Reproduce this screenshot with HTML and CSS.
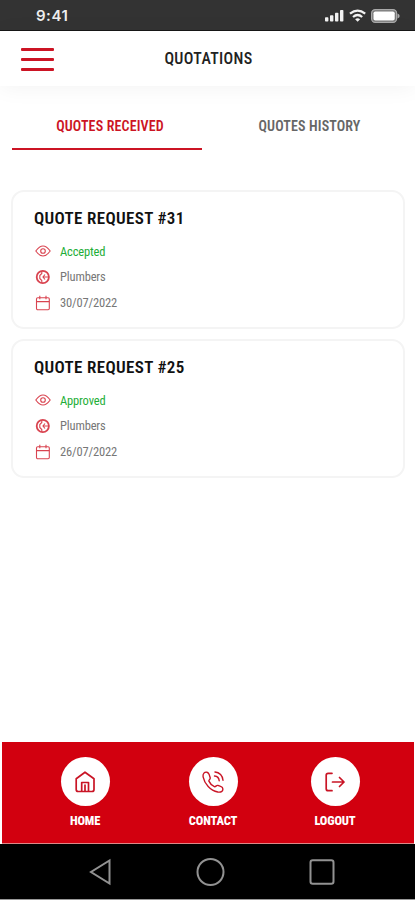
FILE: index.html
```html
<!DOCTYPE html>
<html lang="en">
<head>
<meta charset="utf-8">
<title>Quotations</title>
<link rel="stylesheet" href="styles.css">
</head>
<body>
<div class="status">
  <span class="time">9:41</span>
  <svg class="signals" width="76" height="16" viewBox="0 0 76 16">
    <g fill="#f2f2f2"><rect x="1" y="9.3" width="3.4" height="4.3" rx=".8"/><rect x="6" y="7.2" width="3.4" height="6.4" rx=".8"/><rect x="11" y="4.8" width="3.4" height="8.8" rx=".8"/><rect x="16" y="2" width="3.4" height="11.6" rx=".8"/></g>
    <g fill="none" stroke="#f2f2f2" stroke-width="2.2"><path d="M26 5.700q7.600-6.200 15.200 0"/><path d="M29 9q4.600-4 9.200 0"/></g>
    <path d="M31.100 11.200q2.500-2 5 0l-2.500 2.600z" fill="#f2f2f2"/>
    <rect x="47.600" y="1.600" width="25" height="12.800" rx="3.600" fill="#777" stroke="#aaa" stroke-width="1.200"/>
    <rect x="49.500" y="3.400" width="21.200" height="9.200" rx="1.800" fill="#fff"/>
    <path d="M73.500 5.600q2.200.8 2.200 2.400t-2.200 2.400z" fill="#aaa"/>
  </svg>
</div>
<header class="header">
  <button class="menu" aria-label="Menu"><i></i><i></i><i></i></button>
  <h1><span>QUOTATIONS</span></h1>
</header>
<nav class="tabs">
  <a class="tab active"><span>QUOTES RECEIVED</span></a>
  <a class="tab"><span>QUOTES HISTORY</span></a>
</nav>
<svg class="defs" width="0" height="0">
  <symbol id="eye" viewBox="0 0 16 16"><path d="M.8 8Q8-2 15.200 8 8 18 .8 8z"/><circle cx="8" cy="8" r="2.300"/></symbol>
  <symbol id="trade" viewBox="0 0 16 16"><circle cx="7.800" cy="8" r="6.100" stroke-width="1.800"/><path d="M6.800 2v2.500L4.800 6.500v3l2 2V14M7.500 8H14M10 5.500 8 8l2 2.500"/></symbol>
  <symbol id="date" viewBox="0 0 16 16"><rect x="1.500" y="2.800" width="12.800" height="12" rx="1.200"/><path d="M1.500 6.600h12.800M4.800.8v3.400M11 .8v3.400"/></symbol>
</svg>
<main class="cards">
  <section class="card">
    <h2><span>QUOTE REQUEST #31</span></h2>
    <ul>
      <li class="ok"><svg><use href="#eye"/></svg><span>Accepted</span></li>
      <li><svg><use href="#trade"/></svg><span>Plumbers</span></li>
      <li><svg><use href="#date"/></svg><span>30/07/2022</span></li>
    </ul>
  </section>
  <section class="card">
    <h2><span>QUOTE REQUEST #25</span></h2>
    <ul>
      <li class="ok"><svg><use href="#eye"/></svg><span>Approved</span></li>
      <li><svg><use href="#trade"/></svg><span>Plumbers</span></li>
      <li><svg><use href="#date"/></svg><span>26/07/2022</span></li>
    </ul>
  </section>
</main>
<footer class="bottom">
  <a class="item"><b class="disc"><svg viewBox="0 0 24 24"><path d="M3.200 8.700 12 2.200l9 6.500v10.800q0 2-2 2H5.200q-2 0-2-2zM8.700 21.500v-9h6.800v9M12 15v6.500"/></svg></b><span>HOME</span></a>
  <a class="item"><b class="disc"><svg class="phone" viewBox="0 0 24 24"><path d="M6 2.200c-2.400-.6-4.500 1.600-3.900 4.600C3.600 14 9.200 20.400 16.800 22c3.200.6 5.100-.8 5.100-3.100 0-1.400-.8-2-2.300-2.500l-2.700-1c-1.700-.4-2.200 1.800-3.500 1.200-2.600-1.100-4.400-3-5.500-5.500-.4-1.100 1.800-1.700 1.300-3.300l-1-3.200C7.800 3.300 7.200 2.500 6 2.200zM13.500 6c2.800.2 4.500 2 4.700 4.700M14 2c4.500.2 7.700 3.700 8 8.200"/></svg></b><span>CONTACT</span></a>
  <a class="item"><b class="disc"><svg viewBox="0 0 24 24"><path d="M9 3.300H5.200q-2 0-2 2v13.400q0 2 2 2H9M9.500 12H21M16.500 7.500 21 12l-4.500 4.500"/></svg></b><span>LOGOUT</span></a>
</footer>
<div class="system">
  <svg width="23" height="28" viewBox="0 0 23 28"><path d="M20.500 2.500v23L2 14z"/></svg>
  <svg width="30" height="30" viewBox="0 0 30 30"><circle cx="14.500" cy="15" r="13"/></svg>
  <svg width="26" height="26" viewBox="0 0 26 26"><rect x="1.500" y="1.200" width="23" height="23.500" rx="2.200"/></svg>
</div>
</body>
</html>
```
FILE: styles.css
```css
* { box-sizing: border-box; margin: 0; padding: 0; }
body { width: 415px; height: 900px; display: flex; flex-direction: column; background: #fff; font-family: "Roboto Condensed", Roboto, sans-serif; font-stretch: 75%; overflow: hidden; }
span { white-space: nowrap; display: inline-block; }
.status { height: 31px; flex: none; background: #333; border-bottom: 1px solid #171717; display: flex; justify-content: space-between; align-items: center; padding: 2px 15px 0 36px; color: #eee; }
.time { font: 600 15px/18px Inter, sans-serif; letter-spacing: .5px; }
.header { height: 55px; flex: none; background: #fff; box-shadow: 0 2px 22px rgba(0,0,0,.05); display: grid; grid-template-columns: 54px 1fr 54px; align-items: center; padding-top: 1px; }
.menu { width: 33px; margin-left: 21px; border: 0; background: none; display: flex; flex-direction: column; gap: 7px; }
.menu i { height: 3px; border-radius: 1px; background: #cc1424; }
h1 { font-size: 16px; line-height: 20px; font-weight: 500; color: #222; text-align: center; letter-spacing: .35px; padding: 0 0 0 2px; }
.tabs { display: grid; grid-template-columns: 190px 1fr; column-gap: 12px; padding: 0 12px; height: 64px; flex: none; }
.tab { text-align: center; font-size: 14px; line-height: 20px; font-weight: 600; color: #666; padding: 30px 0 0 2px; letter-spacing: .15px; }
.active { color: #cc1424; border-bottom: 2px solid #cc1424; padding-left: 6px; }
.defs { position: absolute; }
.cards { padding: 40px 11px 0; flex: 1; display: flex; flex-direction: column; gap: 10px; }
.card { width: 394px; height: 139px; border: 2px solid #f4f4f4; border-radius: 13px; padding: 15px 21px; }
h2 { font-size: 17px; line-height: 22px; font-weight: 600; color: #111; letter-spacing: .34px; }
ul { list-style: none; padding-top: 9px; }
li { height: 26px; display: flex; align-items: center; gap: 9px; font-size: 12.5px; color: #777; letter-spacing: -.15px; }
li:nth-child(2) { height: 25px; }
li:nth-child(3) { height: 27px; }
li svg { width: 16px; height: 16px; margin-left: 1px; fill: none; stroke: #d94450; stroke-width: 1.1; }
.ok { color: #1eae38; }
.bottom { height: 102px; flex: none; margin: 0 1px 0 2px; background: #d2000f; display: grid; grid-template-columns: 128px 128px 116px; padding: 15px 0 0 19px; border-bottom: 1px solid #d88; }
.item { display: flex; flex-direction: column; align-items: center; font-size: 12.5px; line-height: 16px; font-weight: 800; color: #fff; gap: 7px; letter-spacing: -.15px; }
.disc { width: 49px; height: 49px; border-radius: 50%; background: #fff; display: grid; place-items: center; }
.disc svg { width: 24px; height: 24px; fill: none; stroke: #c91425; stroke-width: 1.7; stroke-linecap: round; stroke-linejoin: round; }
.disc .phone { stroke-width: 1.4; }
.system { height: 56px; flex: none; background: #000; border-bottom: 1px solid #999; display: flex; justify-content: space-between; align-items: center; padding: 1px 80px 0 89px; }
.system svg { fill: none; stroke: #929292; stroke-width: 2; }
```
